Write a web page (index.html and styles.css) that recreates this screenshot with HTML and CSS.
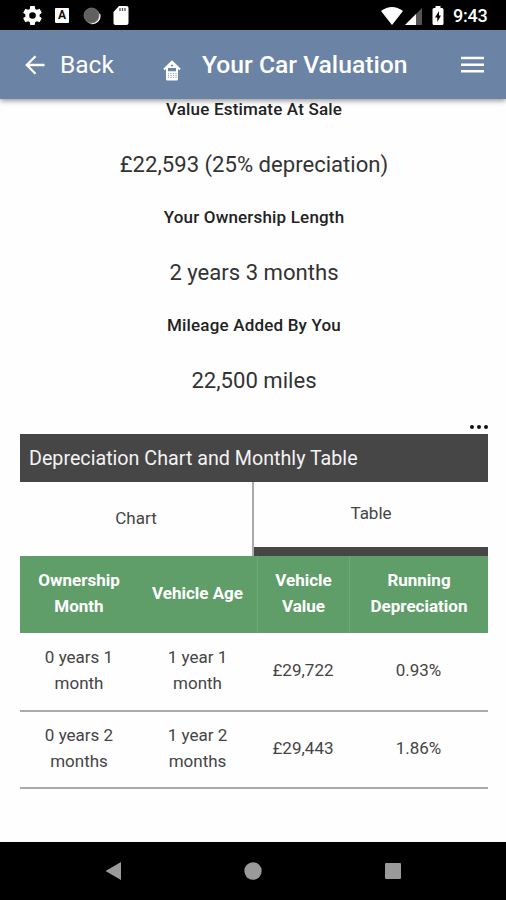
FILE: index.html
```html
<!DOCTYPE html>
<html lang="en">
<head>
<meta charset="utf-8">
<title>Your Car Valuation</title>
<link rel="stylesheet" href="styles.css">
</head>
<body>
<div class="status">
  <svg class="gear" viewBox="2 2 20 20"><path fill="#fff" d="M19.43 12.98c.04-.32.07-.64.07-.98s-.03-.66-.07-.98l2.11-1.65c.19-.15.24-.42.12-.64l-2-3.46c-.12-.22-.39-.3-.61-.22l-2.49 1c-.52-.4-1.08-.73-1.69-.98l-.38-2.65C14.46 2.18 14.25 2 14 2h-4c-.25 0-.46.18-.49.42l-.38 2.65c-.61.25-1.17.59-1.69.98l-2.49-1c-.23-.09-.49 0-.61.22l-2 3.46c-.13.22-.07.49.12.64l2.11 1.65c-.04.32-.07.65-.07.98s.03.66.07.98l-2.11 1.65c-.19.15-.24.42-.12.64l2 3.46c.12.22.39.3.61.22l2.49-1c.52.4 1.08.73 1.69.98l.38 2.65c.03.24.24.42.49.42h4c.25 0 .46-.18.49-.42l.38-2.65c.61-.25 1.17-.59 1.69-.98l2.49 1c.23.09.49 0 .61-.22l2-3.46c.12-.22.07-.49-.12-.64l-2.11-1.65zM12 15.500a3.500 3.500 0 1 1 0-7 3.500 3.500 0 0 1 0 7z"/></svg>
  <span class="abox">A</span>
  <svg class="sync" viewBox="0 0 18 18"><circle cx="9.500" cy="9.500" r="7.500" fill="#aaa"/><path d="M16.500 7a7.500 7.500 0 0 1-8 9.500" fill="none" stroke="#fff" stroke-width="1.500"/><circle cx="8.500" cy="8.500" r="7.500" fill="#606060" stroke="#777" stroke-width=".8"/></svg>
  <svg class="sd" viewBox="0 0 16 19"><path fill="#fff" d="M6 0h7.500Q15.500 0 15.500 2v15q0 2-2 2h-11q-2 0-2-2V6z"/><path stroke="#555" stroke-width="1.300" d="M7 2v3M9.500 2v3M12 2v3"/></svg>
  <span class="spacer"></span>
  <svg class="wifi" viewBox="0 0 22 18"><path fill="#fff" d="M0 4Q11-4 22 4L11 18z"/></svg>
  <svg class="signal" viewBox="0 0 17 17"><path fill="#555" d="M17 0v17H0z"/><path fill="#fff" d="M11 6v11H0z"/></svg>
  <svg class="battery" viewBox="0 0 12 19"><path fill="#fff" d="M3.500 0h5v2H10q1.500 0 1.500 1.500v14Q11.500 19 10 19H2Q.5 19 .5 17.500v-14Q.5 2 2 2h1.500z"/><path fill="#000" d="M7 5 3 11.500h2.300V16L9 9.500H7z"/></svg>
  <span class="time">9:43</span>
</div>
<header class="bar">
  <svg class="arrow" viewBox="0 0 20 20"><path fill="none" stroke="#fff" stroke-width="2.300" d="M19.500 10H2M10.500 1.300 1.800 10l8.700 8.700"/></svg>
  <span class="back">Back</span>
  <svg class="house" viewBox="0 0 18 21"><path fill="none" stroke="#fff" stroke-width="2.200" d="M1 9.500 9 1.800l8 7.700"/><path fill="#fff" d="M9 2 2 9h1v10q0 1.500 1.500 1.500h9Q15 20.500 15 19V9h1z"/><path fill="#6b83a5" d="M5 8h8v3.200H5zM8 4.800h2v1.500H8z"/><path stroke="#9eafc8" stroke-width="1.200" d="M5.500 13v5M8 13v5M10.500 13v5M13 13v5" stroke-dasharray="1.200 .8"/></svg>
  <h1 class="title">Your Car Valuation</h1>
  <svg class="menu" viewBox="0 0 23 17"><path stroke="#fff" stroke-width="2.500" d="M0 2h23M0 8.700h23M0 15.300h23"/></svg>
</header>
<main class="content">
  <dl class="facts">
    <dt>Value Estimate At Sale</dt><dd>£22,593 (25% depreciation)</dd>
    <dt>Your Ownership Length</dt><dd>2 years 3 months</dd>
    <dt>Mileage Added By You</dt><dd>22,500 miles</dd>
  </dl>
  <div class="more"><i></i><i></i><i></i></div>
  <h2 class="section">Depreciation Chart and Monthly Table</h2>
  <div class="tabs"><div class="tab">Chart</div><div class="tab active">Table</div></div>
  <div class="grid head"><div>Ownership<br>Month</div><div>Vehicle Age</div><div>Vehicle<br>Value</div><div>Running<br>Depreciation</div></div>
  <div class="grid row first"><div>0 years 1<br>month</div><div>1 year 1<br>month</div><div>£29,722</div><div>0.93%</div></div>
  <div class="grid row"><div>0 years 2<br>months</div><div>1 year 2<br>months</div><div>£29,443</div><div>1.86%</div></div>
</main>
<nav class="nav">
  <svg viewBox="0 0 20 20"><path fill="#9a9a9a" d="M18 1v18L2.500 10z"/></svg>
  <svg viewBox="0 0 20 20"><circle cx="10" cy="10" r="8.700" fill="#9a9a9a"/></svg>
  <svg viewBox="0 0 20 20"><rect x="2" y="2" width="16" height="16" rx="1" fill="#9a9a9a"/></svg>
</nav>
</body>
</html>
```
FILE: styles.css
```css
* { box-sizing: border-box; }
body { margin: 0; width: 506px; height: 900px; overflow: hidden; display: flex; flex-direction: column; background: #fefefe; color: #222; font-family: Roboto, "Liberation Sans", sans-serif; }
svg { display: block; flex: none; }
h1, h2, dl, dd { margin: 0; }
.status { flex: none; height: 30px; background: #000; display: flex; align-items: center; padding: 1px 19px 0 23px; color: #fff; }
.gear { width: 19px; height: 19px; }
.abox { width: 14px; height: 15px; margin-left: 13px; background: #fff; border-radius: 1px; color: #111; font-size: 12px; font-weight: 700; line-height: 15px; text-align: center; }
.sync { width: 18px; height: 18px; margin-left: 14px; }
.sd { width: 16px; height: 19px; margin-left: 12px; }
.spacer { flex: 1; }
.wifi { width: 22px; height: 18px; }
.signal { width: 17px; height: 17px; margin: 2px 0 0 2px; }
.battery { width: 12px; height: 19px; margin-left: 10px; }
.time { width: 34px; margin-left: 9px; font-size: 18px; font-weight: 500; line-height: 28px; letter-spacing: -.2px; white-space: nowrap; }
.bar { flex: none; position: relative; z-index: 1; height: 69px; background: #6b83a5; box-shadow: 0 2px 5px rgba(0,0,0,.4); display: flex; align-items: center; padding: 0 22px 0 25px; color: #fff; }
.arrow { width: 20px; height: 20px; }
.back { width: 55px; margin-left: 15px; font-size: 24.5px; line-height: 30px; padding-top: 1px; white-space: nowrap; }
.house { width: 18px; height: 21px; margin: 11px 0 0 48px; }
.title { margin-left: 21px; font-size: 24.7px; line-height: 30px; padding-top: 1px; font-weight: 500; white-space: nowrap; }
.menu { width: 23px; height: 17px; margin-left: auto; }
.content { flex: 1; padding: 0 18px 0 20px; margin-top: -17px; }
.facts { height: 325px; text-align: center; }
.facts dt, .facts dd { height: 54px; line-height: 54px; white-space: nowrap; }
.facts dt { font-size: 17px; font-weight: 500; letter-spacing: .18px; }
.facts dd { padding-top: 1px; font-size: 22.1px; color: #333; }
.more { height: 27px; display: flex; justify-content: flex-end; align-items: flex-end; gap: 3px; padding-bottom: 5px; }
.more i { width: 4px; height: 4px; border-radius: 2px; background: #111; }
.section { height: 48px; padding-left: 9px; background: #464646; color: #f3f3f3; font-size: 19.7px; font-weight: 400; line-height: 49px; white-space: nowrap; }
.tabs { height: 74px; display: grid; grid-template-columns: 232px 1fr; font-size: 17px; color: #444; text-align: center; }
.tab { line-height: 73px; }
.tab.active { line-height: 62px; border-left: 2px solid #aaa; box-shadow: inset 0 -9px #464646; }
.grid { display: grid; grid-template-columns: 118px 119px 92px 139px; text-align: center; line-height: 26px; font-size: 17px; }
.grid > div { display: flex; align-items: center; justify-content: center; padding-bottom: 4px; }
.head { height: 77px; background: #5f9e69; color: #fff; font-weight: 700; }
.head > div:nth-child(n+3) { border-left: 1px solid #6ca875; }
.row { height: 77px; border-bottom: 2px solid #aaa; color: #444; }
.row > div { padding-bottom: 3px; }
.row.first { height: 79px; }
.nav { flex: none; height: 58px; background: #000; display: flex; justify-content: center; align-items: center; gap: 120px; }
.nav svg { width: 20px; height: 20px; }
```
